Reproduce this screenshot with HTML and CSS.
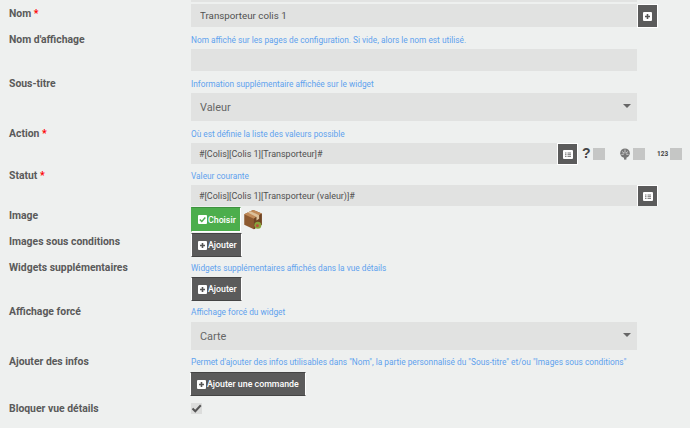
FILE: index.html
```
<!DOCTYPE html>
<html lang="fr">
<head>
<meta charset="utf-8">
<title>Widget</title>
<link rel="stylesheet" href="styles.css">
</head>
<body>
<form class="form">
  <div class="strip"></div>
  <div class="row r-nom">
    <div class="label">Nom <span class="req">*</span></div>
    <div class="line">
      <input class="input grow h23" value="Transporteur colis 1">
      <button type="button" class="sq"><svg class="ico" viewBox="0 0 9 9"><rect width="9" height="9" rx="1" fill="#fff"/><path d="M4.5 2v5M2 4.5h5" stroke="#555" stroke-width="1.6"/></svg></button>
    </div>
  </div>
  <div class="row r-a">
    <div class="label">Nom d'affichage</div>
    <div class="field">
      <div class="help">Nom affiché sur les pages de configuration. Si vide, alors le nom est utilisé.</div>
      <input class="input wide h22">
    </div>
  </div>
  <div class="row r-b">
    <div class="label">Sous-titre</div>
    <div class="field">
      <div class="help">Information supplémentaire affichée sur le widget</div>
      <div class="select wide"><span>Valeur</span><i class="caret"></i></div>
    </div>
  </div>
  <div class="row r-c">
    <div class="label">Action <span class="req">*</span></div>
    <div class="field">
      <div class="help">Où est définie la liste des valeurs possible</div>
      <div class="line">
        <input class="input mono act" value="#[Colis][Colis 1][Transporteur]#">
        <button type="button" class="sq s22"><svg class="ico list" viewBox="0 0 10 9"><rect width="10" height="9" rx="1" fill="#fff"/><path d="M2 3h1.5M2 4.7h1.5M2 6.4h1.5M4.5 3H8M4.5 4.7H8M4.5 6.4H8" stroke="#777" stroke-width="1"/></svg></button>
        <span class="q">?</span><span class="box b-q"></span>
        <svg class="brain" viewBox="0 0 12 12"><circle cx="6" cy="5.2" r="4.8" fill="#777"/><path d="M3 3.5l2 1.5M6 1.5v4M9 3.5L7 5M2.5 6.5L5 6M9.5 6.5L7 6" stroke="#ddd" stroke-width=".8"/><path d="M5 9h2.4v2.6H5z" fill="#777"/></svg><span class="box b-g"></span>
        <span class="n123">123</span><span class="box b-n"></span>
      </div>
    </div>
  </div>
  <div class="row r-d">
    <div class="label">Statut <span class="req">*</span></div>
    <div class="field">
      <div class="help">Valeur courante</div>
      <div class="line">
        <input class="input grow mono h21" value="#[Colis][Colis 1][Transporteur (valeur)]#">
        <button type="button" class="sq s21"><svg class="ico list" viewBox="0 0 10 9"><rect width="10" height="9" rx="1" fill="#fff"/><path d="M2 3h1.5M2 4.7h1.5M2 6.4h1.5M4.5 3H8M4.5 4.7H8M4.5 6.4H8" stroke="#777" stroke-width="1"/></svg></button>
      </div>
    </div>
  </div>
  <div class="row r-e">
    <div class="label">Image</div>
    <div class="line">
      <button type="button" class="btn green"><svg class="ico" viewBox="0 0 9 9"><rect width="9" height="9" rx="1" fill="#fff"/><path d="M1.8 4.5l2 2 3.5-4" fill="none" stroke="#4cae4c" stroke-width="1.4"/></svg>Choisir</button>
      <svg class="parcel" viewBox="0 0 22 24"><path d="M1 6l10-5 10 4v13l-9 5-11-5z" fill="#8d5a30"/><path d="M1 6l11 5 9-6-10-4z" fill="#c08a58"/><path d="M12 11v12l9-5V5z" fill="#6f4423"/><path d="M5 4l10 5v4l3-2V7L8 2.500z" fill="#dcc09a"/><circle cx="16.500" cy="18.500" r="4" fill="#8aa33c"/><circle cx="16" cy="19" r="1.700" fill="#b9503a"/></svg>
    </div>
  </div>
  <div class="row r-f">
    <div class="label">Images sous conditions</div>
    <div class="line">
      <button type="button" class="btn dark"><svg class="ico" viewBox="0 0 9 9"><rect width="9" height="9" rx="1" fill="#fff"/><path d="M4.5 2v5M2 4.5h5" stroke="#555" stroke-width="1.6"/></svg>Ajouter</button>
    </div>
  </div>
  <div class="row r-g">
    <div class="label">Widgets supplémentaires</div>
    <div class="field">
      <div class="help">Widgets supplémentaires affichés dans la vue détails</div>
      <button type="button" class="btn dark"><svg class="ico" viewBox="0 0 9 9"><rect width="9" height="9" rx="1" fill="#fff"/><path d="M4.5 2v5M2 4.5h5" stroke="#555" stroke-width="1.6"/></svg>Ajouter</button>
    </div>
  </div>
  <div class="row r-h">
    <div class="label">Affichage forcé</div>
    <div class="field">
      <div class="help">Affichage forcé du widget</div>
      <div class="select wide"><span>Carte</span><i class="caret"></i></div>
    </div>
  </div>
  <div class="row r-i">
    <div class="label">Ajouter des infos</div>
    <div class="field">
      <div class="help">Permet d'ajouter des infos utilisables dans "Nom", la partie personnalisé du "Sous-titre" et/ou "Images sous conditions"</div>
      <button type="button" class="btn dark cmd"><svg class="ico" viewBox="0 0 9 9"><rect width="9" height="9" rx="1" fill="#fff"/><path d="M4.5 2v5M2 4.5h5" stroke="#555" stroke-width="1.6"/></svg>Ajouter une commande</button>
    </div>
  </div>
  <div class="row r-j">
    <div class="label">Bloquer vue détails</div>
    <div class="check"><svg viewBox="0 0 11 11"><path d="M1.500 5.500l2.800 2.800 5.500-6" fill="none" stroke="#555" stroke-width="2"/></svg></div>
  </div>
</form>
</body>
</html>
```
FILE: styles.css
```
* { box-sizing: border-box; }
html, body { margin: 0; padding: 0; }
body {
  width: 690px;
  height: 428px;
  overflow: hidden;
  background: #eef0ef;
  font-family: Roboto, "Liberation Sans", sans-serif;
  color: #555;
}
.form { display: block; }
.strip { height: 2px; margin-left: 191px; width: 446px; background: #e2e3e2; margin-bottom: 2px; }
.row { display: grid; grid-template-columns: 191px 1fr; }
.label {
  padding-left: 9px;
  font-size: 10.400px;
  font-weight: 700;
  line-height: 18px;
  color: #5a5a5a;
}
.r-nom .label { padding-top: 1px; }
.req { color: #f00; }
.line { display: flex; align-items: flex-start; }
.field { display: block; }
.help {
  height: 18px;
  font-size: 8.300px;
  line-height: 18px;
  color: #5fa2ee;
  white-space: nowrap;
}
.input {
  display: block;
  border: 0;
  outline: 0;
  background: #e1e2e1;
  color: #505050;
  font-family: inherit;
  font-size: 9.750px;
  padding: 0 9px;
}
.mono { font-size: 8.950px; padding: 0 8px; }
.grow { width: 446px; }
.wide { width: 446px; }
.act { width: 366px; height: 21px; }
.h23 { height: 23px; }
.h22 { height: 22px; }
.h21 { height: 21px; }
.select {
  height: 28px;
  background: #e1e2e1;
  display: flex;
  align-items: center;
  justify-content: space-between;
  padding: 0 6px 0 9px;
  font-size: 10.900px;
  color: #666;
}
.caret {
  width: 0;
  height: 0;
  border-left: 4px solid transparent;
  border-right: 4px solid transparent;
  border-top: 4px solid #666;
  margin-top: -3px;
}
.sq {
  width: 21px;
  height: 24px;
  padding: 0;
  border: 1px solid #fff;
  background: #5b5b5b;
  display: flex;
  align-items: center;
  justify-content: center;
  flex: none;
}
.s22 { height: 22px; }
.s21 { height: 21px; border-bottom: 0; }
.ico { width: 9px; height: 9px; flex: none; }
.ico.list { width: 10px; }
.btn {
  display: flex;
  align-items: center;
  gap: 1px;
  height: 24px;
  width: 51px;
  padding: 0 0 0 6px;
  border: 1px solid #fff;
  border-top-color: #444;
  border-bottom-color: #444;
  background: #5b5b5b;
  color: #fff;
  font-family: inherit;
  font-size: 8.800px;
  font-weight: 500;
  white-space: nowrap;
}
.btn.green { width: 50px; height: 25px; background: #4cae4c; border-color: #fff; border-top-color: #3e913e; border-left-color: #4cae4c; }
.btn.cmd { width: 116px; margin-left: -1px; height: 24px; }
.q { font: 700 14px/14px "Liberation Sans", sans-serif; color: #444; margin: 3px 0 0 4px; width: 8px; }
.box { width: 12px; height: 12px; background: #c5c6c5; flex: none; margin-top: 5px; }
.b-q { margin-left: 3px; }
.brain { width: 12px; height: 12px; margin: 5px 0 0 14px; flex: none; }
.b-g { margin-left: 2px; }
.n123 { font-size: 6.500px; font-weight: 700; line-height: 8px; color: #444; margin: 7px 0 0 12px; width: 10px; }
.b-n { margin-left: 3px; }
.parcel { width: 20px; height: 21px; margin: 2px 0 0 2px; }
.r-a { margin-top: 3px; }
.r-b { margin-top: 4px; }
.r-c { margin-top: 4px; }
.r-d { margin-top: 2px; }
.r-e { margin-top: 1px; }
.r-f { margin-top: 1px; }
.r-g { margin-top: 2px; }
.r-h { margin-top: 2px; }
.r-h .select { margin-top: 1px; }
.r-i { margin-top: 3px; }
.r-i .btn { margin-top: 1px; }
.r-j { margin-top: 4px; }
.check { width: 11px; height: 11px; background: #dcdddc; margin-top: 3px; }
.check svg { display: block; width: 11px; height: 11px; }
```
